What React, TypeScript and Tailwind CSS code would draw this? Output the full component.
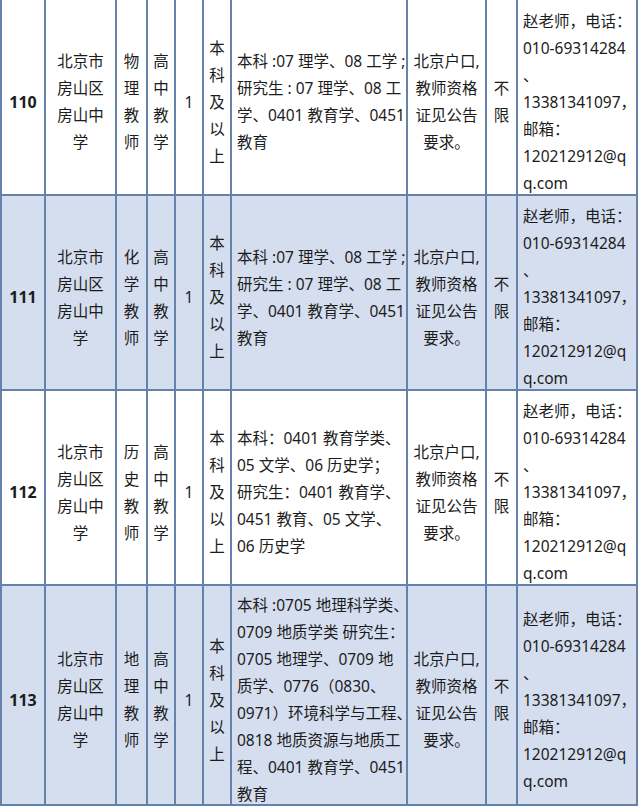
const rows = [
  {
    no: '110',
    subject: ['物', '理', '教', '师'],
    major: ['本科 :07 理学、08 工学 ;', '研究生 : 07 理学、08 工', '学、0401 教育学、0451', '教育'],
    blue: false,
    height: 'h-[196px]',
  },
  {
    no: '111',
    subject: ['化', '学', '教', '师'],
    major: ['本科 :07 理学、08 工学 ;', '研究生 : 07 理学、08 工', '学、0401 教育学、0451', '教育'],
    blue: true,
    height: 'h-[195px]',
  },
  {
    no: '112',
    subject: ['历', '史', '教', '师'],
    major: ['本科：0401 教育学类、', '05 文学、06 历史学；', '研究生：0401 教育学、', '0451 教育、05 文学、', '06 历史学'],
    blue: false,
    height: 'h-[195px]',
  },
  {
    no: '113',
    subject: ['地', '理', '教', '师'],
    major: [
      '本科 :0705 地理科学类、',
      '0709 地质学类 研究生：',
      '0705 地理学、0709 地',
      '质学、0776（0830、',
      '0971）环境科学与工程、',
      '0818 地质资源与地质工',
      '程、0401 教育学、0451',
      '教育',
    ],
    blue: true,
    height: 'h-[220px]',
  },
];

const school = ['北京市', '房山区', '房山中', '学'];
const level = ['高', '中', '教', '学'];
const degree = ['本', '科', '及', '以', '上'];
const req = ['北京户口,', '教师资格', '证见公告', '要求。'];
const contact = ['赵老师，电话：', '010-69314284', '、', '13381341097，', '邮箱：', '120212912@q', 'q.com'];

function Lines({ items }: { items: string[] }) {
  return (
    <div>
      {items.map((t, i) => (
        <div key={i} className="whitespace-nowrap">
          {t}
        </div>
      ))}
    </div>
  );
}

// one bordered cell, content centred vertically a little below the middle
function Cell({ w, left, children }: { w: string; left?: boolean; children: React.ReactNode }) {
  return (
    <div
      className={`${w} shrink-0 h-full border-r-2 border-[#6482aa] flex items-center pt-[10px] ${
        left ? 'justify-start pl-[5px]' : 'justify-center text-center'
      }`}
    >
      {children}
    </div>
  );
}

export default function App() {
  return (
    <div
      className="w-[640px] h-[810px] bg-white overflow-hidden text-[15.5px] leading-[27px] text-[#1c1c1c]"
      style={{ fontFamily: '"Noto Sans", "Noto Sans CJK SC", sans-serif' }}
    >
      <div className="w-[638px] flex flex-col">
        {rows.map((r) => (
          <div
            key={r.no}
            className={`${r.height} flex border-l-2 border-b-2 border-[#6482aa] ${r.blue ? 'bg-[#d5deef]' : 'bg-white'}`}
          >
            <Cell w="w-[44px]">
              <span className="font-bold text-[16px]">{r.no}</span>
            </Cell>
            <Cell w="w-[71px]">
              <Lines items={school} />
            </Cell>
            <Cell w="w-[31px]">
              <Lines items={r.subject} />
            </Cell>
            <Cell w="w-[28px]">
              <Lines items={level} />
            </Cell>
            <Cell w="w-[28px]">1</Cell>
            <Cell w="w-[28px]">
              <Lines items={degree} />
            </Cell>
            <Cell w="w-[176px]" left>
              <Lines items={r.major} />
            </Cell>
            <Cell w="w-[79px]">
              <Lines items={req} />
            </Cell>
            <Cell w="w-[31px]">
              <Lines items={['不', '限']} />
            </Cell>
            <Cell w="w-[120px]" left>
              <Lines items={contact} />
            </Cell>
          </div>
        ))}
      </div>
    </div>
  );
}
